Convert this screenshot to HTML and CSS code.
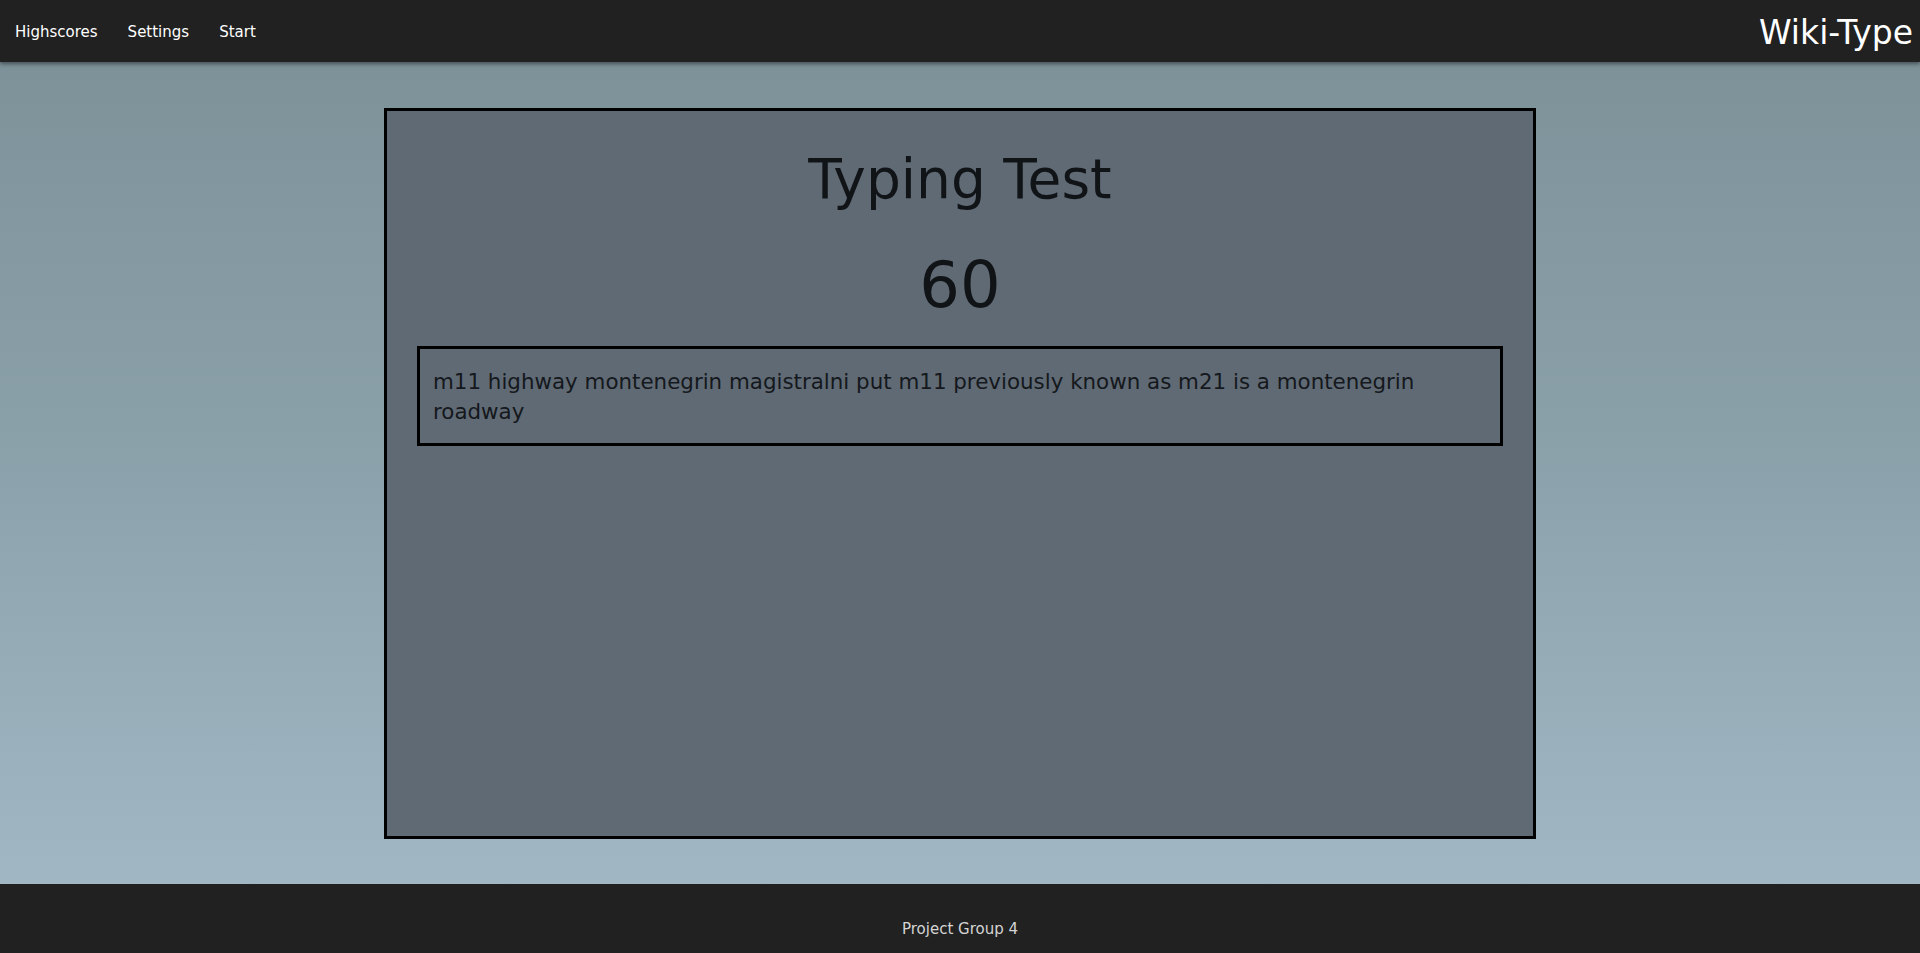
FILE: index.html
```html
<!DOCTYPE html>
<html>
<head>
<meta charset="utf-8">
<title>Wiki-Type</title>
<link rel="stylesheet" href="styles.css">
</head>
<body>
<header class="topbar">
  <nav class="nav">
    <a class="nav-link" href="#">Highscores</a>
    <a class="nav-link" href="#">Settings</a>
    <a class="nav-link" href="#">Start</a>
  </nav>
  <div class="brand">Wiki-Type</div>
</header>
<main class="content">
  <section class="panel">
    <h1 class="title">Typing Test</h1>
    <div class="timer">60</div>
    <div class="text-box">m11 highway montenegrin magistralni put m11 previously known as m21 is a montenegrin roadway</div>
  </section>
</main>
<footer class="footer">Project Group 4</footer>
</body>
</html>
```
FILE: styles.css
```css
html, body {
  margin: 0;
  padding: 0;
}
body {
  font-family: "DejaVu Sans", Verdana, sans-serif;
  min-height: 100vh;
  display: flex;
  flex-direction: column;
  background: linear-gradient(to bottom, #7b8f96 0%, #8aa0a9 45%, #a4bac7 100%);
}
.topbar {
  height: 62px;
  box-sizing: border-box;
  padding-top: 2px;
  background: #212121;
  display: flex;
  align-items: center;
  justify-content: space-between;
  box-shadow: 0 2px 4px rgba(0,0,0,0.45);
  position: relative;
  z-index: 1;
}
.nav {
  display: flex;
  align-items: center;
  padding-left: 15px;
  gap: 30px;
}
.nav-link {
  color: #ffffff;
  text-decoration: none;
  font-size: 15px;
}
.brand {
  color: #ffffff;
  font-size: 33px;
  padding-right: 7px;
}
.content {
  flex: 1;
  display: flex;
  justify-content: center;
  padding: 46px 0 45px;
}
.panel {
  width: 1152px;
  height: 731px;
  box-sizing: border-box;
  border: 3px solid #000;
  background: #5f6a75;
  display: flex;
  flex-direction: column;
  align-items: center;
  padding: 36px 30px 0 30px;
}
.title {
  margin: 0;
  font-size: 55px;
  font-weight: normal;
  color: #111417;
  line-height: normal;
}
.timer {
  margin-top: 37px;
  font-size: 64px;
  color: #111417;
  line-height: normal;
}
.text-box {
  margin-top: 24px;
  align-self: stretch;
  border: 3px solid #000;
  padding: 18px 13px 16px;
  font-size: 21.4px;
  line-height: 30px;
  color: #15181c;
}
.footer {
  height: 69px;
  background: #212121;
  color: #d4d4d4;
  font-size: 15px;
  display: flex;
  align-items: flex-end;
  justify-content: center;
  padding-bottom: 15px;
  box-sizing: border-box;
}
```
